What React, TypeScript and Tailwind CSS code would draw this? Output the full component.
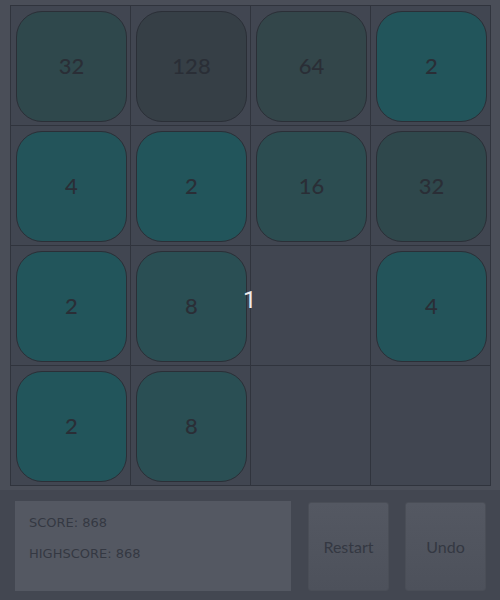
import React from "react";

const board: (number | null)[][] = [
  [32, 128, 64, 2],
  [4, 2, 16, 32],
  [2, 8, null, 4],
  [2, 8, null, null],
];

const tileBg: Record<number, string> = {
  2: "bg-[#22555b]",
  4: "bg-[#23545a]",
  8: "bg-[#2a4f54]",
  16: "bg-[#2c4d51]",
  32: "bg-[#2f484c]",
  64: "bg-[#33464a]",
  128: "bg-[#363f46]",
};

export default function App() {
  return (
    <div className="relative w-[500px] h-[600px] bg-[#4a4e58] flex flex-col" style={{ fontFamily: "Lato, 'Noto Sans', sans-serif" }}>
      <div className="ml-[10px] mt-[5px] w-[481px] border-l border-t border-[#30343d] grid grid-cols-4 bg-[#414651]">
        {board.flat().map((v, i) => (
          <div key={i} className="w-[120px] h-[120px] border-r border-b border-[#30343d] pl-[5px] pt-[5px]">
            {v !== null && (
              <div className={`w-[111px] h-[111px] rounded-[26px] border border-[#2b2f37] ${tileBg[v]} flex items-center justify-center pb-[2px] text-[22px] font-medium text-[#2a2e36]`}>
                {v}
              </div>
            )}
          </div>
        ))}
      </div>
      <div className="mt-[4px] flex-1 bg-[#434751] flex pl-[15px] pt-[11px]">
        <div className="w-[276px] h-[90px] bg-[#545862] flex flex-col pt-[13px] gap-[13px] pl-[14px] text-[13px] text-[#343842]" style={{ fontFamily: "'DejaVu Sans', sans-serif" }}>
          <div className="leading-[18px]">SCORE: 868</div>
          <div className="leading-[18px]">HIGHSCORE: 868</div>
        </div>
        <button className="ml-[17px] mt-[1px] w-[81px] h-[89px] rounded-[3px] border border-[#4a4e57] bg-gradient-to-b from-[#545862] to-[#4d515b] text-[16px] text-[#343842] flex items-center justify-center">
          Restart
        </button>
        <button className="ml-[16px] mt-[1px] w-[81px] h-[89px] rounded-[3px] border border-[#4a4e57] bg-gradient-to-b from-[#545862] to-[#4d515b] text-[16px] text-[#343842] flex items-center justify-center">
          Undo
        </button>
      </div>
      <div className="absolute left-[243px] top-[286px] text-[24px] leading-[28px] text-[#ececec]" style={{ fontFamily: "Roboto, sans-serif" }}>
        1
      </div>
    </div>
  );
}
